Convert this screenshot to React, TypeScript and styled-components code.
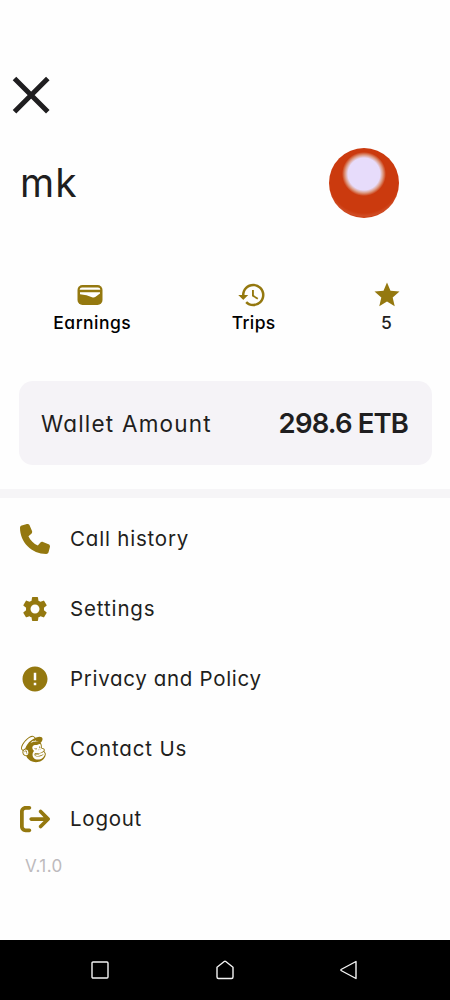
import React from "react";
import styled, { createGlobalStyle } from "styled-components";
import { FaPhone, FaMailchimp, FaArrowRightFromBracket } from "react-icons/fa6";
import { MdSettings, MdError, MdHistory, MdStar } from "react-icons/md";

const GOLD = "#94780f";

const GlobalStyle = createGlobalStyle`
  *, *::before, *::after { box-sizing: border-box; }
  body {
    margin: 0;
    background: #fefefe;
    font-family: Inter, "Open Sans", sans-serif;
    font-feature-settings: "cv11" 1;
    color: #1f1e20;
  }
  svg { display: block; flex: none; }
`;

const Screen = styled.div`
  display: flex;
  flex-direction: column;
  width: 450px;
  height: 1000px;
  overflow: hidden;
`;

const Text = styled.span<{ $size: number; $spacing?: number; $weight?: number; $color?: string }>`
  font-size: ${(p) => p.$size}px;
  letter-spacing: ${(p) => p.$spacing ?? 0}px;
  margin-right: ${(p) => -(p.$spacing ?? 0)}px;
  font-weight: ${(p) => p.$weight ?? 400};
  color: ${(p) => p.$color ?? "#1f1e20"};
  line-height: 1.2;
  white-space: nowrap;
`;

const CloseButton = styled.button`
  display: block;
  width: 38px;
  height: 38px;
  margin: 76px 0 0 12px;
  padding: 0;
  border: 0;
  background: none;
`;

const Profile = styled.header`
  display: flex;
  align-items: center;
  justify-content: space-between;
  height: 72px;
  margin-top: 33px;
  padding: 0 51px 0 20px;
`;

const Avatar = styled.div`
  width: 70px;
  height: 70px;
  border-radius: 50%;
  background:
    radial-gradient(circle at 35px 26px, #e7dcfb 0 16px, #dc987f 19px, #cb3a0e 22px, transparent 23px),
    radial-gradient(circle at 35px 29px, #cb3a0e 0 36px, #cf4c24 39px, #cb3a0e 41px);
`;

const Stats = styled.div`
  display: grid;
  grid-template-columns: 184px 139px 127px;
  height: 58px;
  margin-top: 61px;
`;

const Stat = styled.div`
  display: flex;
  flex-direction: column;
  align-items: center;
  color: ${GOLD};
`;

const StatIcon = styled.div<{ $trailing?: number }>`
  display: flex;
  align-items: center;
  justify-content: center;
  height: 30px;
  margin-bottom: 2px;
  padding-right: ${(p) => p.$trailing ?? 0}px;
`;

const WalletCard = styled.section`
  display: flex;
  align-items: center;
  justify-content: space-between;
  height: 84px;
  margin: 43px 18px 0 19px;
  padding: 0 23px 0 22px;
  border-radius: 14px;
  background: #f5f3f7;
`;

const Divider = styled.div`
  height: 9px;
  margin-top: 24px;
  background: #f6f5f7;
`;

const Menu = styled.nav`
  display: flex;
  flex-direction: column;
  margin-top: 6px;
`;

const MenuItem = styled.a`
  display: flex;
  align-items: center;
  height: 70px;
  padding-left: 20px;
  color: ${GOLD};
`;

const MenuIcon = styled.span`
  width: 50px;
`;

const Version = styled.footer`
  margin: 2px 0 0 25px;
  line-height: 20px;
`;

const SystemBar = styled.div`
  display: flex;
  align-items: center;
  justify-content: space-between;
  height: 60px;
  margin-top: auto;
  padding: 0 91px 0 90px;
  background: #000;
`;

const navStroke = { fill: "none", stroke: "#f4f4f4", strokeWidth: 1.4, strokeLinejoin: "round" as const };

const CardWallet = () => (
  <svg width="26" height="22" viewBox="0 0 26 22">
    <rect x="0.5" y="1" width="25" height="20" rx="5" fill={GOLD} />
    <path d="M5 3.4H21Q23.2 3.4 23.4 5.7H2.6Q2.8 3.4 5 3.4Z" fill="#fff" />
    <path d="M3 8.2H23V9.4L18.6 12.7Q17 14 15 13.2L9.5 11.2L3 10.2Z" fill="#fff" />
  </svg>
);

/* The mascot glyph is narrower than its em box, so it is drawn flush left. */
const Mascot = () => (
  <svg width="30" height="30" viewBox="0 0 30 30" fill="currentColor">
    <FaMailchimp size={30} x={-1.6} />
  </svg>
);

const menu = [
  { label: "Call history", icon: <FaPhone size={30} />, spacing: 0.8 },
  { label: "Settings", icon: <MdSettings size={30} />, spacing: 0.88 },
  { label: "Privacy and Policy", icon: <MdError size={30} />, spacing: 0.68 },
  { label: "Contact Us", icon: <Mascot />, spacing: 0.85 },
  { label: "Logout", icon: <FaArrowRightFromBracket size={30} />, spacing: 0.75 },
];

export default function App() {
  return (
    <>
      <GlobalStyle />
      <Screen>
        <CloseButton aria-label="Close">
          <svg width="38" height="38" viewBox="0 0 38 38">
            <path d="M2.5 2.5L35.8 35.8M35.8 2.5L2.5 35.8" stroke="#1f1e20" strokeWidth="5" />
          </svg>
        </CloseButton>
        <Profile>
          <Text $size={39} $spacing={1.2}>mk</Text>
          <Avatar />
        </Profile>
        <Stats>
          <Stat>
            <StatIcon $trailing={5}><CardWallet /></StatIcon>
            <Text $size={17.5} $weight={500} $spacing={0.45} $color="#000">Earnings</Text>
          </Stat>
          <Stat>
            <StatIcon $trailing={4}><MdHistory size={30} /></StatIcon>
            <Text $size={17.5} $weight={500} $spacing={0.35} $color="#000">Trips</Text>
          </Stat>
          <Stat>
            <StatIcon><MdStar size={30} /></StatIcon>
            <Text $size={17.5} $weight={500}>5</Text>
          </Stat>
        </Stats>
        <WalletCard>
          <Text $size={22.5} $spacing={1.2}>Wallet Amount</Text>
          <Text $size={27.5} $spacing={-0.85} $weight={600}>298.6 ETB</Text>
        </WalletCard>
        <Divider />
        <Menu>
          {menu.map((item) => (
            <MenuItem key={item.label}>
              <MenuIcon>{item.icon}</MenuIcon>
              <Text $size={20.5} $spacing={item.spacing}>{item.label}</Text>
            </MenuItem>
          ))}
        </Menu>
        <Version>
          <Text $size={17} $spacing={0.4} $color="#bdbabd">V.1.0</Text>
        </Version>
        <SystemBar>
          <svg width="20" height="20" viewBox="0 0 20 20">
            <rect x="2" y="2" width="16" height="16" rx="1" {...navStroke} />
          </svg>
          <svg width="20" height="20" viewBox="0 0 20 20">
            <path d="M2 7.2L9.2 1.5Q10 1 10.8 1.5L18 7.2V17Q18 18.5 16.5 18.5H3.5Q2 18.5 2 17Z" {...navStroke} />
          </svg>
          <svg width="20" height="20" viewBox="0 0 20 20">
            <path d="M17 1.5V18.5L2 10.5V9.5Z" {...navStroke} />
          </svg>
        </SystemBar>
      </Screen>
    </>
  );
}
